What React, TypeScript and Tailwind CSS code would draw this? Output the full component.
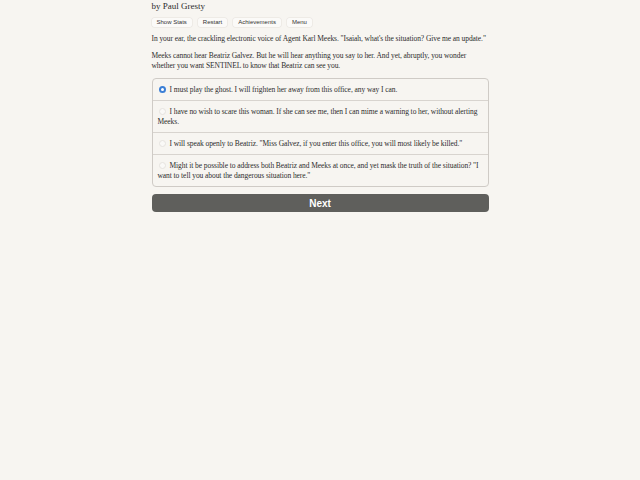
import { useState } from "react";

const choices = [
  "I must play the ghost. I will frighten her away from this office, any way I can.",
  "I have no wish to scare this woman. If she can see me, then I can mime a warning to her, without alerting Meeks.",
  'I will speak openly to Beatriz. "Miss Galvez, if you enter this office, you will most likely be killed."',
  'Might it be possible to address both Beatriz and Meeks at once, and yet mask the truth of the situation? "I want to tell you about the dangerous situation here."',
];

const menu = ["Show Stats", "Restart", "Achievements", "Menu"];

export default function App() {
  const [picked, setPicked] = useState(0);

  return (
    <div className="min-h-[480px] w-full bg-[#f7f5f1] font-['Liberation_Serif',serif] text-[#2c2c2c]">
      <div className="mx-auto w-[337px] pt-px">
        <div className="text-[9px] leading-[10px]">by Paul Gresty</div>

        <div className="mt-[7px] flex gap-[6px]">
          {menu.map((m) => (
            <button
              key={m}
              className="h-[9px] rounded-[2px] bg-[#fbfaf8] px-[5px] font-['Liberation_Sans',sans-serif] text-[6px] leading-[9px] text-[#333] shadow-[0_0_0_0.5px_#e6e2dc]"
            >
              {m}
            </button>
          ))}
        </div>

        <div className="text-[7.5px] leading-[10px] tracking-[-0.07px]">
          <p className="mt-[7px]">
            In your ear, the crackling electronic voice of Agent Karl Meeks. "Isaiah, what's the situation? Give me an update."
          </p>
          <p className="mt-[7px]">
            Meeks cannot hear Beatriz Galvez. But he will hear anything you say to her. And yet, abruptly, you wonder whether you want SENTINEL to know that Beatriz can see you.
          </p>

          {/* choice list */}
          <div className="mt-[7px] overflow-hidden rounded-[4px] border border-[#cfcbc6] bg-[#f7f5f1]">
            {choices.map((c, i) => (
              <label
                key={i}
                onClick={() => setPicked(i)}
                className={`block cursor-pointer px-[5px] py-[5.5px] ${i > 0 ? "border-t border-[#d8d4cf]" : ""}`}
              >
                <span
                  className={`relative top-[1px] mr-[4px] ml-[1px] inline-block h-[7px] w-[7px] rounded-full ${
                    picked === i
                      ? "border-[2px] border-[#3b7fd6] bg-white"
                      : "border border-[#e6e3df] bg-[#faf9f7]"
                  }`}
                />
                {c}
              </label>
            ))}
          </div>
        </div>

        <button className="mt-[7px] h-[18px] w-full rounded-[4px] bg-[#5f5f5c] font-['Liberation_Sans',sans-serif] text-[10px] font-bold text-white">
          Next
        </button>
      </div>
    </div>
  );
}
